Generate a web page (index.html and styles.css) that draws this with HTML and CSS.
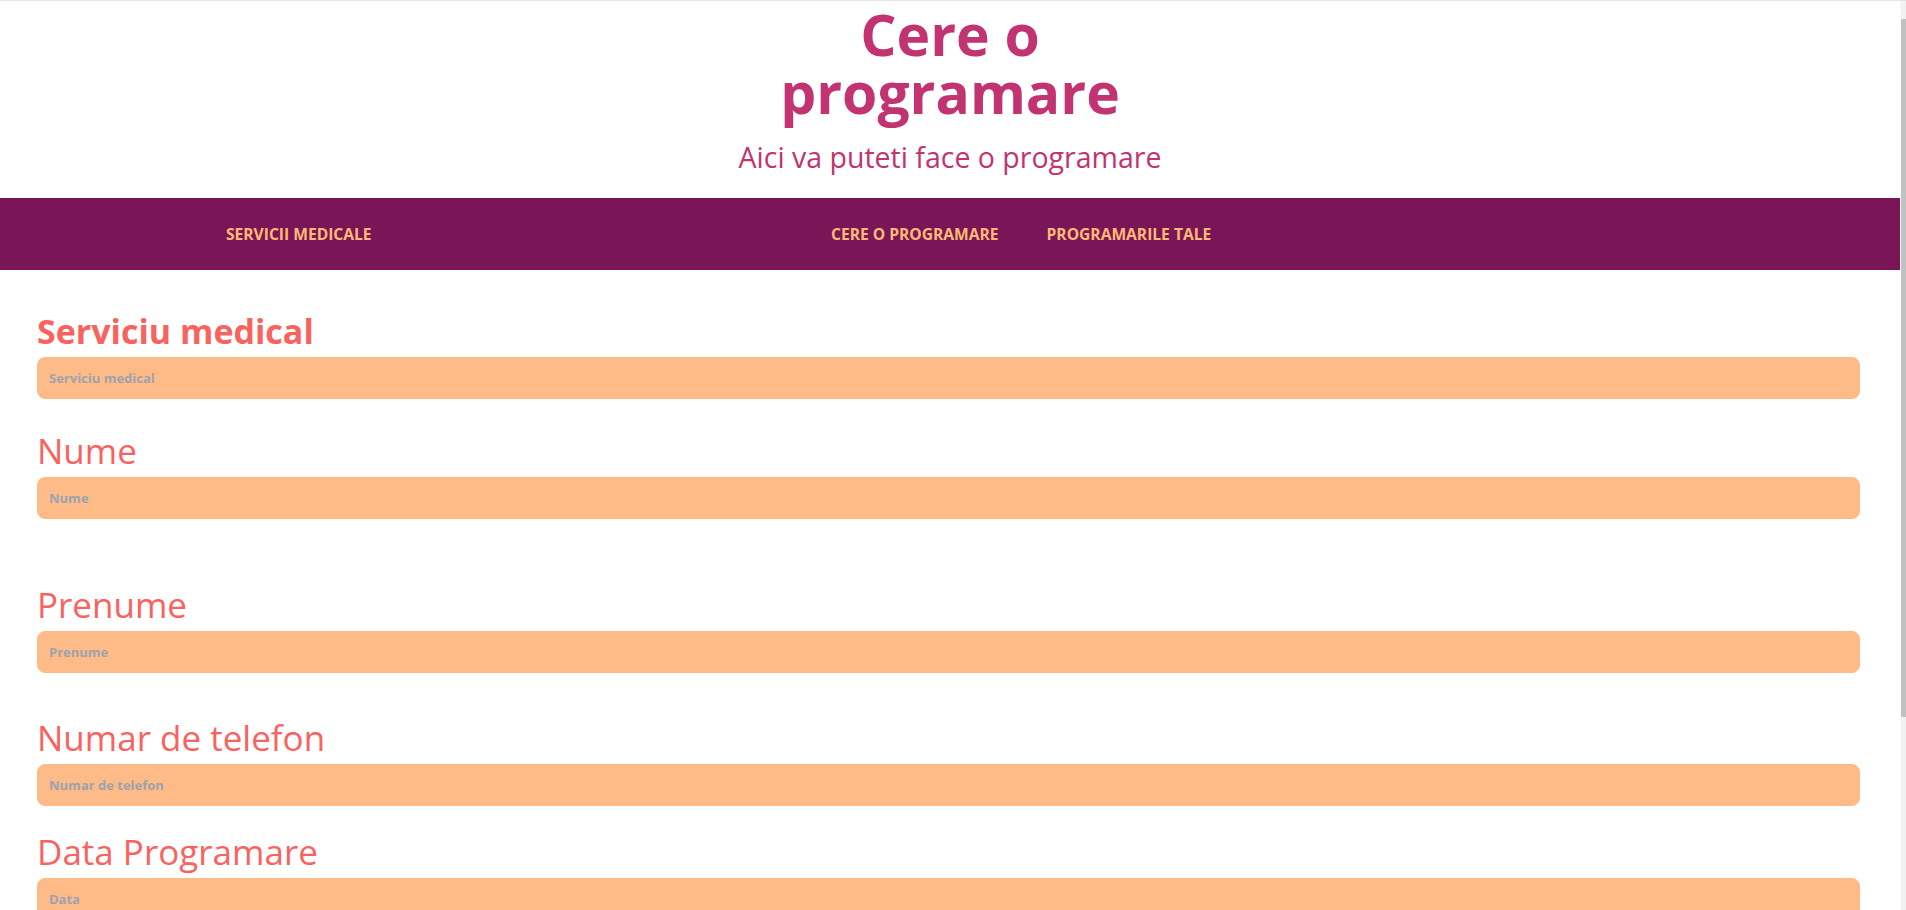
FILE: index.html
```html
<!DOCTYPE html>
<html lang="ro">
<head>
<meta charset="utf-8">
<title>Cere o programare</title>
<link rel="stylesheet" href="styles.css">
</head>
<body>
<div class="window">
  <div class="page">
    <header class="hero">
      <h1 class="hero-title">Cere o programare</h1>
      <p class="hero-sub">Aici va puteti face o programare</p>
    </header>
    <nav class="nav">
      <a class="nav-link nav-brand" href="#">SERVICII MEDICALE</a>
      <div class="nav-group">
        <a class="nav-link" href="#">CERE O PROGRAMARE</a>
        <a class="nav-link" href="#">PROGRAMARILE TALE</a>
      </div>
    </nav>
    <form class="form">
      <div class="field field-a">
        <label class="label label-bold" for="serviciu">Serviciu medical</label>
        <input class="input" id="serviciu" type="text" placeholder="Serviciu medical">
      </div>
      <div class="field field-b">
        <label class="label" for="nume">Nume</label>
        <input class="input" id="nume" type="text" placeholder="Nume">
      </div>
      <div class="field field-c">
        <label class="label" for="prenume">Prenume</label>
        <input class="input" id="prenume" type="text" placeholder="Prenume">
      </div>
      <div class="field field-d">
        <label class="label" for="telefon">Numar de telefon</label>
        <input class="input" id="telefon" type="text" placeholder="Numar de telefon">
      </div>
      <div class="field">
        <label class="label" for="data">Data Programare</label>
        <input class="input" id="data" type="text" placeholder="Data">
      </div>
    </form>
  </div>
  <div class="scrollbar"><div class="scrollbar-thumb"></div></div>
</div>
</body>
</html>
```

FILE: styles.css
```css
* { box-sizing: border-box; }
html, body { margin: 0; padding: 0; height: 100%; overflow: hidden; }
body {
  font-family: "Open Sans", "Noto Sans", sans-serif;
  background: #ffffff;
}
.window {
  display: flex;
  height: 910px;
  border-top: 1px solid #e3e3ec;
}
.page {
  flex: 1;
  min-width: 0;
  overflow: hidden;
}
.hero {
  display: flex;
  flex-direction: column;
  align-items: center;
  padding-top: 4px;
  padding-bottom: 23px;
}
.hero-title {
  margin: 0;
  max-width: 400px;
  text-align: center;
  font-size: 57px;
  line-height: 58px;
  font-weight: 700;
  color: #c13371;
}
.hero-sub {
  margin: 18px 0 0;
  font-size: 28.5px;
  line-height: 36px;
  color: #c13371;
}
.nav {
  display: flex;
  align-items: center;
  height: 72px;
  background: #7a1657;
  padding-left: 226px;
}
.nav-link {
  color: #fdba74;
  text-decoration: none;
  font-weight: 700;
  font-size: 15.6px;
  line-height: 20px;
}
.nav-brand {
  flex: none;
  width: 605px;
}
.nav-group {
  display: flex;
  gap: 48px;
}
.form {
  padding: 41px 40px 0 37px;
}
.field { display: flex; flex-direction: column; }
.field-a { margin-bottom: 32px; }
.field-b { margin-bottom: 66px; }
.field-c { margin-bottom: 45px; }
.field-d { margin-bottom: 26px; }
.label {
  font-size: 35px;
  line-height: 40px;
  font-weight: 400;
  color: #f9635f;
  margin-bottom: 6px;
}
.label-bold { font-weight: 700; font-size: 34px; }
.input {
  height: 42px;
  width: 100%;
  border: 1px solid #febb87;
  border-radius: 8px;
  background: #febb87;
  padding: 0 11px;
  font-family: "Open Sans", "Noto Sans", sans-serif;
  font-size: 13px;
  font-weight: 700;
  color: #374151;
  outline: none;
}
.input::placeholder { color: #9ca3af; opacity: 1; }
.scrollbar {
  flex: none;
  width: 6px;
  background: #f1f1f1;
  border-left: 1px solid #fafafa;
  padding-top: 18px;
}
.scrollbar-thumb {
  height: 698px;
  background: #c1c1c1;
}
```
